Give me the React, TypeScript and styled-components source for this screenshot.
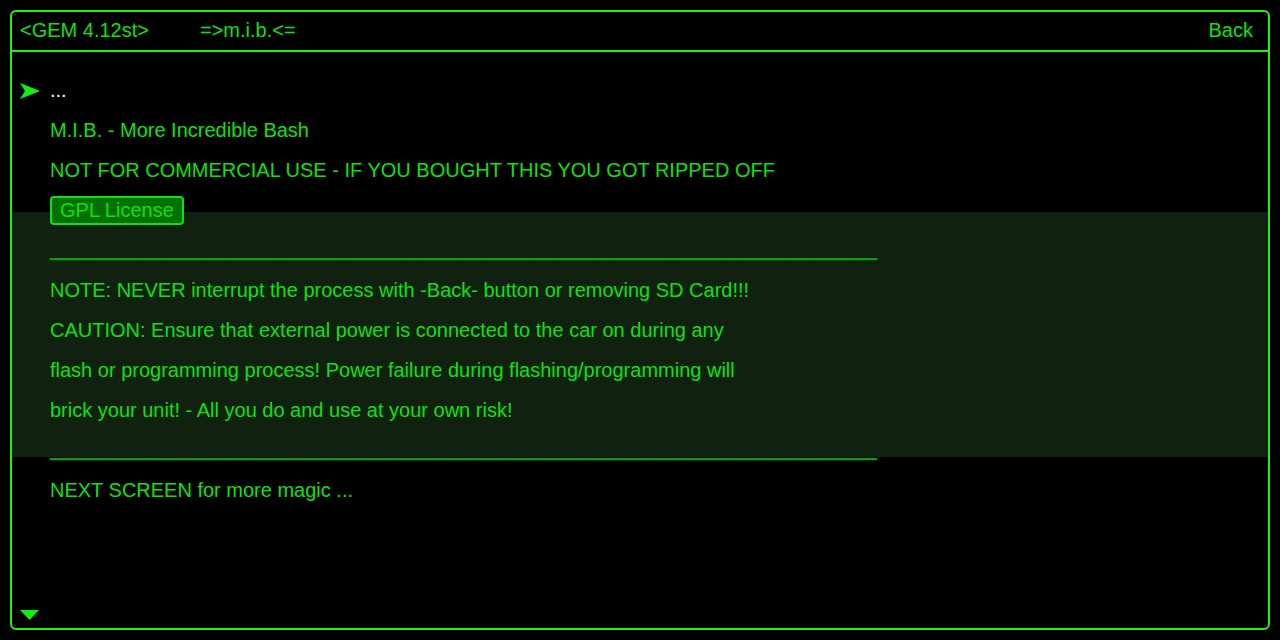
import React from "react";
import styled, { createGlobalStyle } from "styled-components";

const Global = createGlobalStyle`
  html, body { margin: 0; padding: 0; background: #000; }
  body { padding: 10px; font-family: "Liberation Sans", Arial, sans-serif; }
  * { box-sizing: border-box; }
`;

const Frame = styled.div`
  width: 1260px;
  height: 620px;
  border: 2px solid #1ef01e;
  border-radius: 6px;
  display: flex;
  flex-direction: column;
  color: #10e010;
  font-size: 20px;
  overflow: hidden;
`;

const Header = styled.div`
  height: 40px;
  flex: none;
  border-bottom: 2px solid #1ef01e;
  display: flex;
  align-items: center;
  padding: 0 15px 2px 8px;
`;

const HeaderItem = styled.span<{ $gap?: number }>`
  margin-right: ${(p) => p.$gap ?? 0}px;
  line-height: 1;
`;

const Spacer = styled.div`
  flex: 1;
`;

const Body = styled.div`
  flex: 1;
  display: flex;
  flex-direction: column;
  padding-top: 18px;
  position: relative;
`;

const Row = styled.div<{ $white?: boolean }>`
  height: 40px;
  display: flex;
  align-items: center;
  padding-left: 38px;
  position: relative;
  color: ${(p) => (p.$white ? "#ffffff" : "#10e010")};
  white-space: nowrap;
`;

const Rule = styled(Row)`
  color: #129a12;
  letter-spacing: 0.05px;
  text-shadow: 0 1px 0 #129a12;
  padding-bottom: 3px;
`;

const Pointer = styled.svg`
  position: absolute;
  left: 8px;
  top: 13px;
`;

const Highlight = styled.div`
  background: #10220f;
  margin: -18px 0 -27px;
  padding: 18px 0 27px;
`;

const License = styled.button`
  font: inherit;
  font-size: 20px;
  color: #10e010;
  background: #037003;
  border: 2px solid #10e010;
  border-radius: 4px;
  height: 29px;
  padding: 0 8px;
  display: flex;
  align-items: center;
  cursor: pointer;
`;

const DownArrow = styled.svg`
  position: absolute;
  left: 8px;
  bottom: 8px;
`;

const rule = "_".repeat(74);

export default function App() {
  return (
    <>
      <Global />
      <Frame>
        <Header>
          <HeaderItem $gap={51}>&lt;GEM 4.12st&gt;</HeaderItem>
          <HeaderItem>=&gt;m.i.b.&lt;=</HeaderItem>
          <Spacer />
          <HeaderItem>Back</HeaderItem>
        </Header>
        <Body>
          <Row $white>
            <Pointer width="20" height="16" viewBox="0 0 20 16">
              <polygon points="0,0 20,8 0,16 5,8" fill="#10f010" />
            </Pointer>
            ...
          </Row>
          <Row>M.I.B. - More Incredible Bash</Row>
          <Row>NOT FOR COMMERCIAL USE - IF YOU BOUGHT THIS YOU GOT RIPPED OFF</Row>
          <Row>
            <License>GPL License</License>
          </Row>
          <Highlight>
            <Rule>{rule}</Rule>
            <Row>NOTE: NEVER interrupt the process with -Back- button or removing SD Card!!!</Row>
            <Row>CAUTION: Ensure that external power is connected to the car on during any</Row>
            <Row>flash or programming process! Power failure during flashing/programming will</Row>
            <Row>brick your unit! - All you do and use at your own risk!</Row>
          </Highlight>
          <Rule>{rule}</Rule>
          <Row>NEXT SCREEN for more magic ...</Row>
          <DownArrow width="19" height="10" viewBox="0 0 19 10">
            <polygon points="0,0 19,0 9.5,10" fill="#10f010" />
          </DownArrow>
        </Body>
      </Frame>
    </>
  );
}
